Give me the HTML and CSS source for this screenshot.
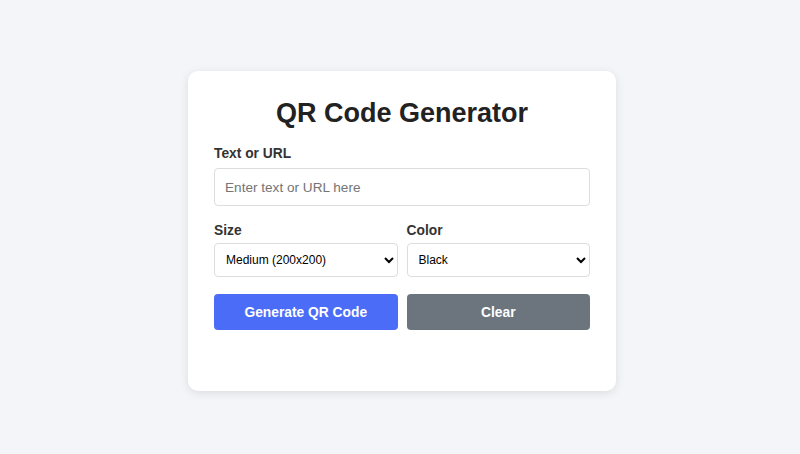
FILE: index.html
```html
<!DOCTYPE html>
<html lang="en">
<head>
<meta charset="utf-8">
<title>QR Code Generator</title>
<link rel="stylesheet" href="styles.css">
</head>
<body>
<main class="card">
  <h1 class="title">QR Code Generator</h1>
  <div class="field">
    <label class="label" for="text">Text or URL</label>
    <input class="input" id="text" type="text" placeholder="Enter text or URL here">
  </div>
  <div class="row">
    <div class="field">
      <label class="label label-tight" for="size">Size</label>
      <select class="select" id="size">
        <option>Small (150x150)</option>
        <option selected>Medium (200x200)</option>
        <option>Large (300x300)</option>
      </select>
    </div>
    <div class="field">
      <label class="label label-tight" for="color">Color</label>
      <select class="select" id="color">
        <option selected>Black</option>
        <option>Blue</option>
        <option>Red</option>
      </select>
    </div>
  </div>
  <div class="row buttons">
    <button class="btn btn-primary" type="button">Generate QR Code</button>
    <button class="btn btn-secondary" type="button">Clear</button>
  </div>
  <div class="result"></div>
</main>
</body>
</html>
```

FILE: styles.css
```css
* { box-sizing: border-box; }

html, body { margin: 0; }

body {
  min-height: 100vh;
  background: #f4f5f9;
  font-family: "Liberation Sans", Arial, sans-serif;
  color: #333;
  display: flex;
  justify-content: center;
  align-items: flex-start;
  padding: 71px 0 0 4px;
}

.card {
  width: 428px;
  background: #fff;
  border-radius: 10px;
  box-shadow: 0 2px 10px rgba(0, 0, 0, 0.1);
  padding: 26px 26px 26px;
  display: flex;
  flex-direction: column;
}

.title {
  margin: 0 0 16px;
  text-align: center;
  font-size: 27px;
  line-height: 32px;
  font-weight: 700;
  color: #222;
}

.field {
  display: flex;
  flex-direction: column;
  flex: 1;
  min-width: 0;
}

.label {
  font-size: 13.8px;
  font-weight: 700;
  line-height: 17px;
  margin-bottom: 6px;
  color: #333;
}
.label-tight { margin-bottom: 4px; }

.input {
  height: 38px;
  border: 1px solid #ddd;
  border-radius: 4px;
  padding: 0 10px;
  font-family: inherit;
  font-size: 13.6px;
  color: #333;
}
.input::placeholder { color: #757575; }

.row {
  display: flex;
  gap: 9px;
  margin-top: 16px;
}

.select {
  height: 34px;
  border: 1px solid #ddd;
  border-radius: 4px;
  padding: 0 7px;
  font-family: inherit;
  font-size: 12px;
  background: #fff;
  color: #000;
}

.buttons { margin-top: 17px; }

.btn {
  flex: 1;
  height: 36px;
  border: 0;
  border-radius: 4px;
  color: #fff;
  font-family: inherit;
  font-size: 13.8px;
  font-weight: 700;
}
.btn-primary { background: #4a6cf7; }
.btn-secondary { background: #6c757d; }

.result { height: 35px; }
```
